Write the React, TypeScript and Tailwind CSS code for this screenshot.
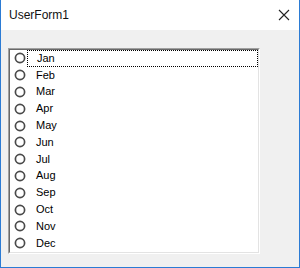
const months = ['Jan', 'Feb', 'Mar', 'Apr', 'May', 'Jun', 'Jul', 'Aug', 'Sep', 'Oct', 'Nov', 'Dec']

export default function App() {
  return (
    <div
      className="w-[300px] h-[268px] flex flex-col bg-[#f0f0f0] border-x border-b border-[#2b7bd4] overflow-hidden"
      style={{ fontFamily: '"Liberation Sans", Arial, sans-serif' }}
    >
      {/* title bar */}
      <div className="h-[30px] shrink-0 bg-white flex items-center justify-between pl-[8px] pr-[8px]">
        <span className="text-[12px] text-[#111] leading-none">UserForm1</span>
        <svg width="12" height="12" viewBox="0 0 12 12" className="mr-[1px]">
          <path d="M1 1L11 11M11 1L1 11" stroke="#222" strokeWidth="1.1" fill="none" />
        </svg>
      </div>

      {/* list box */}
      <div className="mt-[18px] ml-[7px] w-[252px] h-[206px] border-t border-l border-[#a0a0a0] border-r-white border-b-white border-r border-b">
        <div className="w-full h-full bg-white border-t border-l border-[#696969] border-r border-b border-r-[#e3e3e3] border-b-[#e3e3e3]">
          {months.map((m, i) => (
            <div key={m} className="h-[16.8px] flex items-center">
              <svg width="12" height="12" viewBox="0 0 12 12" className="ml-[4px] shrink-0">
                <circle cx="6" cy="6" r="4.6" fill="white" stroke="#4a4a4a" strokeWidth="1.7" />
              </svg>
              <div
                className={`ml-[1px] flex-1 h-full flex items-center pl-[9px] text-[11px] text-black leading-none ${
                  i === 0 ? 'border border-dotted border-black pl-[8px]' : ''
                }`}
              >
                {m}
              </div>
            </div>
          ))}
        </div>
      </div>
    </div>
  )
}
